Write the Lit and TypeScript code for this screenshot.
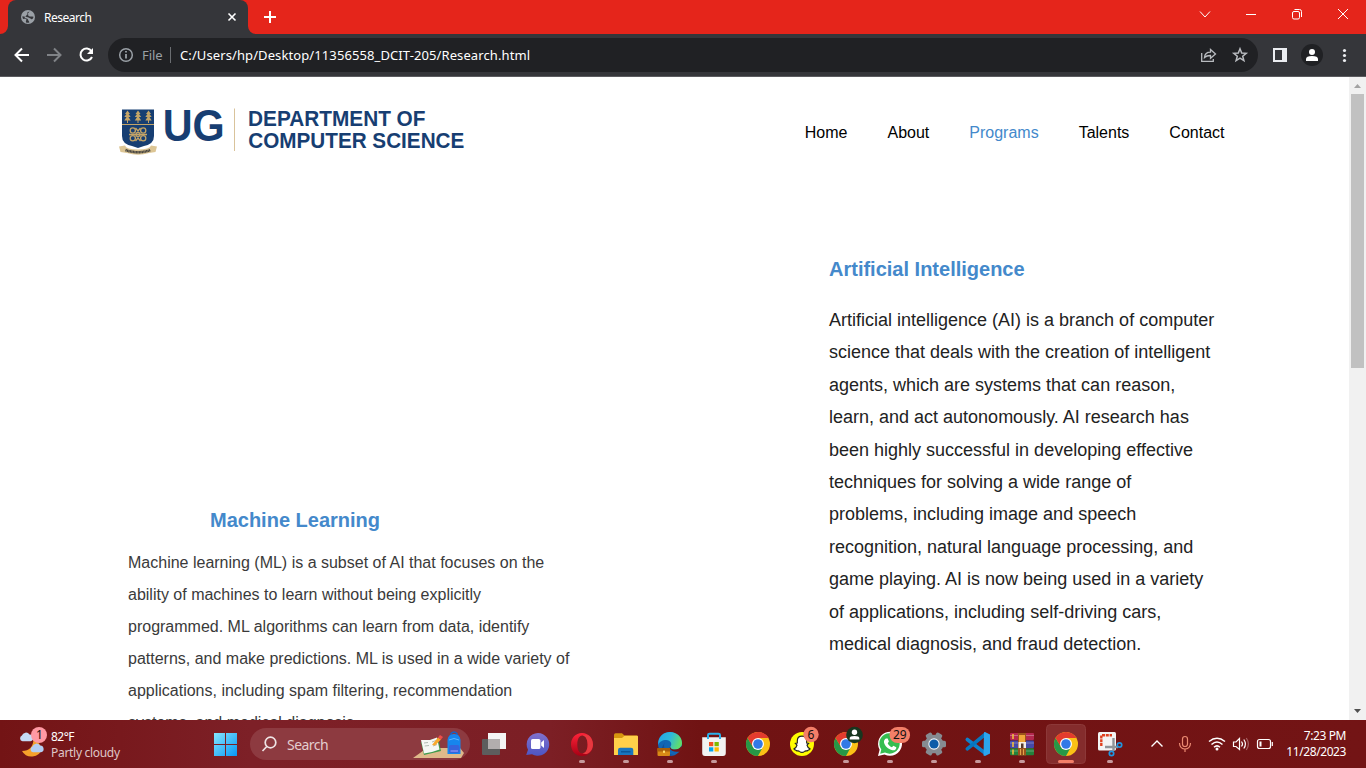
import { LitElement, html, css, svg } from "lit";
import { customElement } from "lit/decorators.js";

const chromeLogo = (cx: number, cy: number) => svg`
  <g transform="translate(${cx} ${cy})">
    <circle r="12" fill="#fbc116"/>
    <path d="M-10.4-6L-4.9 2.9L0 5.6L4.9 2.9L0 12A12 12 0 0 1-10.4-6Z" fill="#279847"/>
    <path d="M-10.4-6A12 12 0 0 1 10.4-6H0V0L-5 2.9Z" fill="#e33b2e"/>
    <circle r="6" fill="#fff"/><circle r="4.8" fill="#3279e6"/>
  </g>`;

const cloud = (x: number, y: number, fill: string) => svg`
  <path transform="translate(${x} ${y})" d="M3 9.3A3 3 0 0 1 2.4 3.6A4.2 4.2 0 0 1 10 2.6A3.4 3.4 0 0 1 11 9.3Z" fill=${fill}/>`;

const apps = [
  { art: svg`
    <rect x="10" y="19" width="18" height="16" rx="1" fill="#5d5d5d"/>
    <path d="M16 13H34V29H16Z" fill="#f4f4f4"/><path d="M16 19H28V29H16Z" fill="#b2adad"/>` },
  { art: svg`
    <defs><linearGradient id="ch" x1="0" y1="0" x2="0" y2="1"><stop stop-color="#8171cc"/><stop offset="1" stop-color="#4c55c4"/></linearGradient></defs>
    <path d="M22 13A11.4 11.4 0 1 1 16 34.2L10.2 35L12 29.8A11.4 11.4 0 0 1 22 13Z" fill="url(#ch)"/>
    <rect x="15" y="19" width="9.4" height="10" rx="1.6" fill="#fff"/><path d="M25.2 22.6L28 20V28L25.2 25.4Z" fill="#fff"/>` },
  { run: true, art: svg`
    <defs><linearGradient id="op" x1="0" y1="0" x2="0" y2="1"><stop stop-color="#ff2339"/><stop offset="1" stop-color="#a70014"/></linearGradient></defs>
    <path fill-rule="evenodd" d="M22 13C28.5 13 33 18 33 24.4S28.5 36 22 36S11 30.8 11 24.4S15.500 13 22 13ZM22.400 15.500C19 15.500 17.300 19.500 17.300 24.400S19 33.300 22.400 33.300S27.600 29.400 27.600 24.400S25.800 15.500 22.400 15.500Z" fill="url(#op)"/>
    <path d="M22.400 15.500C28 12.500 33 18.500 33 24.400S28 36 22.400 33.300C26 33 27.600 29 27.600 24.400S26 16 22.400 15.500Z" fill="#e8383f"/>` },
  { run: true, art: svg`
    <path d="M10 15Q10 13.300 11.500 13.300H18L20.500 15.500H33Q34 15.500 34 17V25H10Z" fill="#d7960f"/>
    <path d="M10 18H18L20.500 15.700H33Q34 15.700 34 17V35H10Z" fill="#ffd04a"/>
    <path d="M14 35V30Q14 27.700 16.300 27.700H27Q29.300 27.700 29.300 30V35Z" fill="#1976bf"/><path d="M17 31H26.500V32.500H17Z" fill="#0b5699"/>` },
  { run: true, art: svg`
    <defs><linearGradient id="ed" x1="0" y1="0" x2="1" y2=".3"><stop stop-color="#26a4e4"/><stop offset=".55" stop-color="#2db9dc"/><stop offset="1" stop-color="#5fdc6e"/></linearGradient></defs>
    <circle cx="22" cy="24" r="12" fill="#1266b5"/>
    <path d="M10.300 22C11 16 16 12 22 12C29 12 34 17 34 23C34 27 31 29.600 27 29.600C23.500 29.600 21.500 28 22.500 26.600C24.500 24 22.500 20 18.500 20C14 20 11 22 10.300 25Z" fill="url(#ed)"/>
    <path d="M17 22C14 27 18 34 25 35L22 36L12 31Z" fill="#154f9b"/>
    <path d="M22.500 26.600C21.500 28.200 24 29.800 27 29.600C29.500 29.500 32 28.500 33.500 26L34.500 30L32 31.500C27 32.500 22.500 31 21.500 28Z" fill="#741616"/>
    <rect x="9.500" y="28" width="12.500" height="8" rx="1" fill="#d88a16"/><rect x="9.500" y="28" width="12.500" height="3.500" fill="#a95f0b"/><rect x="15" y="30.600" width="2" height="2.200" fill="#ffe06b"/>` },
  { run: true, art: svg`
    <path d="M10.200 17.300H33.800V33Q33.800 36 31 36H13Q10.200 36 10.200 33Z" fill="#f2f2f2"/>
    <path d="M16 19V15Q16 13.700 17.500 13.700H26.500Q28 13.700 28 15V19" fill="none" stroke="#2bb2ec" stroke-width="2"/>
    <path d="M17 22H21.300V26.200H17Z" fill="#f25022"/><path d="M22.500 22H26.800V26.200H22.500Z" fill="#7fba00"/><path d="M17 27.300H21.300V31.500H17Z" fill="#00a4ef"/><path d="M22.500 27.300H26.800V31.500H22.500Z" fill="#ffb900"/>` },
  { art: chromeLogo(22, 24) },
  { art: svg`
    <circle cx="22" cy="24" r="12" fill="#fffc00"/>
    <path d="M22 16.200C25 16.200 26.700 18 26.700 21V23L28.600 23.400L27 25.200C27.500 27.200 28.800 28.400 30 28.900C29.800 30 28 30 27.600 30.600C26 31 25.300 30.700 24.600 31.400C23 32.700 21 32.700 19.400 31.400C18.700 30.700 18 31 16.400 30.600C16 30 14.200 30 14 28.900C15.200 28.400 16.500 27.200 17 25.200L15.400 23.400L17.300 23V21C17.300 18 19 16.200 22 16.200Z" fill="#fff" stroke="#222" stroke-width="1.200"/>
    <circle cx="31" cy="14.500" r="7.700" fill="#f37f68"/><text x="31" y="18.600" class="num">6</text>` },
  { run: true, art: svg`${chromeLogo(22, 24)}
    <circle cx="30.500" cy="15" r="8.300" fill="#17361f"/><circle cx="30.500" cy="12.300" r="2.700" fill="#fff"/><path d="M25.700 19.600V18Q25.700 16 30.500 16T35.300 18V19.600Z" fill="#fff"/>` },
  { run: true, art: svg`
    <path d="M10 36L11.600 29.700A12 12 0 1 1 16.500 34.400Z" fill="#fff"/>
    <path d="M12.200 33.800L13.300 29.500A10.200 10.200 0 1 1 17 32.600Z" fill="#35bd50"/>
    <path d="M18 18.500L19.700 18.600L20.900 21.600L19.700 23.200C20.700 25.300 22.200 26.500 24 27.200L25.300 25.700L28.300 27.200C28.500 29.600 26.500 30.600 24.500 30.200C20 29.300 16.800 26 16 22.500C15.700 20.500 16.800 19 18 18.500Z" fill="#fff"/>
    <rect x="21.500" y="7" width="20.600" height="16" rx="8" fill="#f37f68"/><text x="31.800" y="19" class="num">29</text>` },
  { run: true, art: svg`
    <g transform="translate(22 24)" fill="#868b91">
      <circle r="9.300"/>
      ${[0, 60, 120].map(a => svg`<rect x="-3.300" y="-12" width="6.600" height="24" rx="1.600" transform="rotate(${a + 30})"/>`)}
      <circle r="5.700" fill="#eef3f8"/><circle r="4.600" fill="#0d5ca8"/>
    </g>` },
  { run: true, art: svg`
    <path d="M11.300 19.500L29 33" stroke="#0f80cc" stroke-width="3.600" stroke-linecap="round"/>
    <path d="M11.300 28.800L29 14.500" stroke="#0876bf" stroke-width="3.600" stroke-linecap="round"/>
    <path d="M28 12.300L29 12L34 14.500V33.500L29 36L27.500 35.500Z" fill="#2ca5ee"/>` },
  { run: true, art: svg`
    <rect x="10" y="13" width="24" height="7" rx="1" fill="#b4284f"/><rect x="10" y="20.500" width="24" height="7.500" rx="1" fill="#4549a8"/><rect x="10" y="28.300" width="24" height="7" rx="1" fill="#24823b"/>
    <path d="M10 15.500H34M10 23H34M10 31H34" stroke="#e8dfe8" stroke-opacity=".35"/>
    <path d="M13 14V19M13 22V27M13 29.500V34.500" stroke="#f1be3d" stroke-width="1.600"/>
    <path d="M18 13H26V35.500H18Z" fill="#9b531c"/><path d="M19 15H25V22H19Z" fill="#f0a63a"/><rect x="18.500" y="22" width="7.500" height="6" fill="#f3eee5"/><rect x="21" y="23.500" width="2.500" height="4.500" fill="#54372a"/><path d="M20.500 29V35M23.500 29V35" stroke="#e5a34b"/>` },
  { run: true, on: true, art: chromeLogo(22, 24) },
  { run: true, art: svg`
    <rect x="10" y="12" width="18" height="18.500" rx="1.500" fill="#f4f4f4"/>
    <path d="M13.300 26V15.300H24" fill="none" stroke="#e0401f" stroke-width="2.400" stroke-dasharray="3 .8"/>
    <path d="M25.500 18V31M17 27H30" stroke="#8f9498" stroke-width="2.400"/>
    <circle cx="31.500" cy="25" r="2.200" fill="none" stroke="#1f96e0" stroke-width="1.700"/><circle cx="23.500" cy="33.500" r="2.200" fill="none" stroke="#1f96e0" stroke-width="1.700"/>` },
] as { art: unknown; run?: boolean; on?: boolean }[];

const ai = [
  "Artificial intelligence (AI) is a branch of computer",
  "science that deals with the creation of intelligent",
  "agents, which are systems that can reason,",
  "learn, and act autonomously. AI research has",
  "been highly successful in developing effective",
  "techniques for solving a wide range of",
  "problems, including image and speech",
  "recognition, natural language processing, and",
  "game playing. AI is now being used in a variety",
  "of applications, including self-driving cars,",
  "medical diagnosis, and fraud detection.",
];
const ml = [
  "Machine learning (ML) is a subset of AI that focuses on the",
  "ability of machines to learn without being explicitly",
  "programmed. ML algorithms can learn from data, identify",
  "patterns, and make predictions. ML is used in a wide variety of",
  "applications, including spam filtering, recommendation",
  "systems, and medical diagnosis.",
];

@customElement("app-root")
export class AppRoot extends LitElement {
  static styles = css`
    :host { display: flex; flex-direction: column; width: 1366px; height: 768px; overflow: hidden; font-family: "Noto Sans", sans-serif; font-size: 12px; color: #fff; }
    * { box-sizing: border-box; }
    svg { display: block; flex: none; }
    .tabs { height: 34px; flex: none; background: #e5251b; display: flex; justify-content: space-between; }
    .left { display: flex; }
    .foot { align-self: flex-end; }
    .tab { width: 240px; height: 34px; background: #35363a; border-radius: 8px 8px 0 0; display: flex; align-items: center; padding: 0 10px 0 13px; }
    .tab .name { margin-left: 9px; flex: 1; font-size: 12px; letter-spacing: -.5px; }
    .bar { height: 43px; flex: none; background: #35363a; border-bottom: 1px solid #5b5b5f; display: flex; align-items: center; }
    .omni { width: 1150px; height: 34px; border-radius: 17px; background: #202124; display: flex; align-items: center; font-size: 13px; }
    .file { color: #9aa0a6; margin-left: 8px; width: 28px; letter-spacing: -.1px; }
    .sep { width: 1px; height: 16px; background: #6a6d71; margin-right: 9px; }
    .url { flex: 1; letter-spacing: .1px; white-space: nowrap; }
    .view { height: 643px; flex: none; display: flex; background: #fff; color: #222; font-family: "Liberation Sans", Arial, sans-serif; }
    .page { width: 1349px; height: 643px; overflow: hidden; }
    header { display: flex; justify-content: space-between; align-items: center; height: 112px; padding: 0 124.500px 0 110px; }
    nav { display: flex; gap: 40px; font-size: 16px; color: #000; }
    .cur, h2 { color: #4489cb; }
    .logo { margin-bottom: 6px; }
    .logo text { font: bold 22px "Liberation Sans", Arial, sans-serif; fill: #173e72; }
    .logo .ug { font-size: 43.500px; }
    .cols { display: flex; }
    .ml { width: 719px; padding: 319px 0 0 128px; }
    .ai { padding: 68px 0 0 0; margin-left: 110px; }
    h2 { margin: 0; font-size: 20px; line-height: 24px; white-space: nowrap; }
    .ml h2 { padding-left: 82px; }
    p { margin: 0; white-space: nowrap; }
    .ai p { font-size: 18px; line-height: 32.400px; margin-top: 23px; }
    .ml p { font-size: 16px; line-height: 32px; margin-top: 14.500px; color: #3a3a3a; }
    .scroll { width: 17px; background: #f1f1f1; display: flex; flex-direction: column; align-items: center; }
    .thumb { width: 13px; height: 274px; background: #c1c1c1; }
    .grow { flex: 1; }
    .task { height: 48px; flex: none; display: flex; align-items: center; background: linear-gradient(90deg, #731415 0, #78191d 120px, #7d2027 250px, #7c1f25 550px, #701313 700px, #731415 1366px); }
    .wx { width: 148px; line-height: 16px; margin-left: 3px; padding-top: 1px; }
    .wx .temp { letter-spacing: -.5px; }
    .wx .sub { color: #dfc6c7; letter-spacing: -.3px; }
    .search { width: 220px; height: 32px; border-radius: 16px; background: #8d3a40; display: flex; align-items: center; padding-left: 11px; margin: 0 2px 0 10px; font-size: 14px; color: #e3cdcf; }
    .search .lbl { margin-left: 10px; flex: 1; letter-spacing: -.55px; }
    .num { font: 12px "Noto Sans", sans-serif; fill: #111; text-anchor: middle; }
    .app { width: 44px; height: 48px; }
    .clock { flex: 1; text-align: right; padding-right: 20px; line-height: 16px; letter-spacing: -.42px; }
  `;

  render() {
    return html`
      <div class="tabs">
        <div class="left">
          <svg class="foot" width="8" height="8"><path d="M8 0V8H0A8 8 0 0 0 8 0Z" fill="#35363a"/></svg>
          <div class="tab">
            <svg width="14" height="14" viewBox="0 0 14 14"><circle cx="7" cy="7" r="7" fill="#9aa0a6"/><path d="M8.500 1.500C6.500 1.800 5.500 3 6.500 4C8 4.300 6.500 5.500 8 6.300C9.500 6.800 10.500 6.500 12.500 6.800C12.300 8.500 11.500 9.500 10.500 9.300C9.500 8.300 8.500 8.600 7.500 7.600C6.500 6.800 5 6.900 4 6.700L1.400 6.200C1.500 7.500 1.700 8.500 2.300 9C3.500 8.700 4.500 8.300 5.300 9.300C5.700 10.300 4.500 10.500 5 12.400C6.300 12.900 7.500 12.700 8.300 12.500C8.500 11.300 7 10.800 7 9.500C6.300 8.500 5 8.500 3.500 7.800" fill="#35363a"/></svg>
            <span class="name">Research</span>
            <svg width="12" height="12" viewBox="0 0 12 12"><path d="M2.500 2.500L9.500 9.500M9.500 2.500L2.500 9.500" stroke="#fff" stroke-width="1.600"/></svg>
          </div>
          <svg class="foot" width="8" height="8"><path d="M0 0V8H8A8 8 0 0 1 0 0Z" fill="#35363a"/></svg>
          <svg width="28" height="34"><path d="M8 17H20M14 11V23" stroke="#fff" stroke-width="2"/></svg>
        </div>
        <svg width="186" height="34" fill="none" stroke="#fff"><path d="M20 11.500L25 17L30 11.500M66 14.500H76M158 9L168 19M168 9L158 19"/><rect x="112.500" y="11.500" width="7" height="7.500" rx="1.500"/><path d="M114.500 9.500H119.500Q121.500 9.500 121.500 11.500V17"/></svg>
      </div>
      <div class="bar">
        <svg width="108" height="42" fill="none" stroke="#fff" stroke-width="2">
          <path d="M29 21H16M22 14.500L15.500 21L22 27.500"/><path d="M47 21H60M54 14.500L60.500 21L54 27.500" stroke="#808387"/>
          <path d="M91.500 17.200A6 6 0 1 0 92 23"/><path d="M93 14V20H87Z" fill="#fff" stroke="none"/>
        </svg>
        <div class="omni">
          <svg width="26" height="34" fill="none" stroke="#9aa0a6" stroke-width="1.500"><circle cx="18" cy="17" r="6.300"/><path d="M18 16V20.500M18 13V14.600" stroke-width="1.800"/></svg>
          <span class="file">File</span><span class="sep"></span><span class="url">C:/Users/hp/Desktop/11356558_DCIT-205/Research.html</span>
          <svg width="66" height="34" fill="none" stroke="#b9bcc0" stroke-width="1.300"><path d="M9.700 15V23.300H21.300V21"/><path d="M12.500 19.500C12.800 15.500 15.500 14.200 18.500 14.200V11.500L23.500 16L18.500 20.300V17.500C16 17.500 14 18 12.500 19.500Z"/><path d="M48 10.800L49.700 15L54.200 15.300L50.700 18.200L51.900 22.600L48 20.200L44.100 22.600L45.300 18.200L41.800 15.300L46.300 15Z" stroke-width="1.500"/></svg>
        </div>
        <svg width="108" height="42"><path fill-rule="evenodd" d="M15 14H29V28H15ZM17 16V26H24V16Z" fill="#eceef1"/><circle cx="54" cy="21" r="11" fill="#202124"/><circle cx="54" cy="18" r="3" fill="#fff"/><path d="M48 27V25Q48 22 54 22T60 25V27Z" fill="#fff"/><g fill="#eceef1"><circle cx="86.500" cy="16.500" r="1.600"/><circle cx="86.500" cy="21.500" r="1.600"/><circle cx="86.500" cy="26.500" r="1.600"/></g></svg>
      </div>
      <div class="view">
        <div class="page">
          <header>
            <svg class="logo" width="370" height="70" viewBox="0 0 370 70">
              <path d="M12 14.500H44V41Q44 49 34 51L28 53L22 51Q12 49 12 41Z" fill="#173e72"/>
              <path d="M12 29.500H44" stroke="#c4a467"/>
              <g stroke="#c4a467" fill="#c4a467">${[17.5, 28, 38.5].map(x => svg`<path d="M${x} 15.500L${x + 2.5} 19H${x - 2.5}ZM${x} 17.500L${x + 3.2} 22H${x - 3.2}ZM${x} 20.500L${x + 3.2} 25.500H${x - 3.2}Z" stroke="none"/><path d="M${x} 20V28"/>`)}</g>
              <g fill="none" stroke="#c4a467" stroke-width="1.300"><circle cx="22.800" cy="35.500" r="2.600"/><circle cx="33.200" cy="35.500" r="2.600"/><circle cx="22.800" cy="43.300" r="2.600"/><circle cx="33.200" cy="43.300" r="2.600"/><circle cx="28" cy="39.500" r="2"/><path d="M19 39.500H37M25.500 33L28 36L30.500 33M25.500 46L28 43L30.500 46"/></g>
              <path d="M9 51.500L15 50.500Q16 54.500 28 54.500T41 50.500L47 51.500L45.500 57L39 58Q28 61.500 17 58L10.500 57Z" fill="#dcc594"/><path d="M15.500 55Q28 59.500 40.500 55" fill="none" stroke="#46443f" stroke-width="2.500" stroke-dasharray="1.200 .3"/>
              <text class="ug" x="52.700" y="46" textLength="62" lengthAdjust="spacingAndGlyphs">UG</text>
              <path d="M124.500 13.500V56" stroke="#d9c39b"/>
              <text x="138" y="31" textLength="177.500" lengthAdjust="spacingAndGlyphs">DEPARTMENT OF</text>
              <text x="138.300" y="53.300" textLength="216" lengthAdjust="spacingAndGlyphs">COMPUTER SCIENCE</text>
            </svg>
            <nav><span>Home</span><span>About</span><span class="cur">Programs</span><span>Talents</span><span>Contact</span></nav>
          </header>
          <div class="cols">
            <section class="ml"><h2>Machine Learning</h2><p>${ml.map(l => html`${l}<br>`)}</p></section>
            <section class="ai"><h2>Artificial Intelligence</h2><p>${ai.map(l => html`${l}<br>`)}</p></section>
          </div>
        </div>
        <div class="scroll">
          <svg width="17" height="17"><path d="M5 11L8.500 7L12 11Z" fill="#a3a3a3"/></svg>
          <div class="thumb"></div><div class="grow"></div>
          <svg width="17" height="17"><path d="M5 6L8.500 10L12 6Z" fill="#505050"/></svg>
        </div>
      </div>
      <div class="task">
        <svg width="48" height="48">
          <path d="M33.500 19Q38 20 42 29A11 11 0 0 1 22 31Q33 31 33.500 19Z" fill="#f6a12b"/>
          ${cloud(19.5, 12, "#c6dbf6")}${cloud(30, 23, "#b4cff3")}
          <circle cx="39" cy="15" r="8" fill="#ff99a4"/><text class="num" x="39.500" y="19.300">1</text>
        </svg>
        <div class="wx"><div class="temp">82°F</div><div class="sub">Partly cloudy</div></div>
        <svg width="41" height="48" viewBox="199 0 41 48"><defs><linearGradient id="w" x1="0" y1="0" x2="1" y2="1"><stop stop-color="#86e6ff"/><stop offset="1" stop-color="#0797f5"/></linearGradient></defs><path d="M214 13H225V24H214ZM226 13H237V24H226ZM214 25H225V36H214ZM226 25H237V36H226Z" fill="url(#w)"/></svg>
        <div class="search">
          <svg width="16" height="16" fill="none" stroke="#efe4e5" stroke-width="1.700"><circle cx="9.500" cy="6.500" r="5.300"/><path d="M5.800 10.500L1.500 15"/></svg>
          <span class="lbl">Search</span>
          <svg width="58" height="32" viewBox="0 0 58 32">
            <path d="M1 30L15 20H48L52 25L49 30Z" fill="#dfb98a"/>
            <path d="M9 14L26 10L29 23L12 27Z" fill="#3f9a4c"/><path d="M9 12L18 12L20 24L12 25.500ZM18 12L25 9.500L27.500 21.500L20 24Z" fill="#f5f7f4"/><path d="M12 15L16 14.500M12.700 18L17 17.500M20 14L24 12.500M21 18L25 16.500" stroke="#b2bbb3"/>
            <path d="M20 17L26 9.500L29 11.500L23 17.500Z" fill="#f9a82b"/><path d="M26 9.500L28 7L31 9L29 11.500Z" fill="#ef4d4a"/>
            <path d="M39 8V5.500Q42 2.500 45 5.500V8" fill="none" stroke="#1163cb" stroke-width="1.500"/><path d="M35.500 12Q36 6 42 6T48.500 12V26H35.500Z" fill="#1685ed"/><path d="M37 12Q42 9 47 12" fill="none" stroke="#5db7ff"/><rect x="37" y="17" width="10.500" height="8" rx="2" fill="#3563dc"/><path d="M38.500 23H46" stroke="#aaa2ff"/>
          </svg>
        </div>
        ${apps.map(a => html`<svg class="app" viewBox="0 0 44 48">
          ${a.on ? svg`<rect x="2.500" y="4.500" width="39" height="39" rx="4" fill="#842c2c" stroke="#8c3838"/>` : ""}
          ${a.art}
          ${a.run ? svg`<rect x=${a.on ? 14 : 19} y="40" width=${a.on ? 16 : 6} height="3" rx="1.500" fill=${a.on ? "#f37f68" : "#c6999c"}/>` : ""}
        </svg>`)}
        <svg width="145" height="48" viewBox="1132 0 145 48" fill="none" stroke="#fff" stroke-width="1.200">
          <path d="M1151.500 26.500L1157 21L1162.500 26.500" stroke-width="1.400"/>
          <g stroke="#ec8a72"><rect x="1182.500" y="16.500" width="5" height="10" rx="2.500"/><path d="M1179.500 23C1179.500 31 1190.500 31 1190.500 23M1185 29V32"/></g>
          <path d="M1209 21.500Q1217 15 1225 21.500M1211.500 24.500Q1217 19.500 1222.500 24.500M1214 27.300Q1217 24.500 1220 27.300" stroke-width="1.500"/><circle cx="1217" cy="29" r="1.500" fill="#fff" stroke="none"/>
          <path d="M1233.500 22H1236L1239.500 18.500V29.500L1236 26.500H1233.500ZM1241.500 21.500Q1243.500 24 1241.500 26.500M1243.800 19.500Q1247 24 1243.800 28.500"/><path d="M1246.300 18Q1250.500 24 1246.300 30" stroke="#a76263"/>
          <rect x="1257.500" y="19.500" width="13" height="9" rx="2"/><path d="M1259.500 21.500H1261.500V26.500H1259.500Z" fill="#fff" stroke="none"/><path d="M1272.300 22V26"/>
        </svg>
        <div class="clock">7:23 PM<br>11/28/2023</div>
      </div>`;
  }
}
